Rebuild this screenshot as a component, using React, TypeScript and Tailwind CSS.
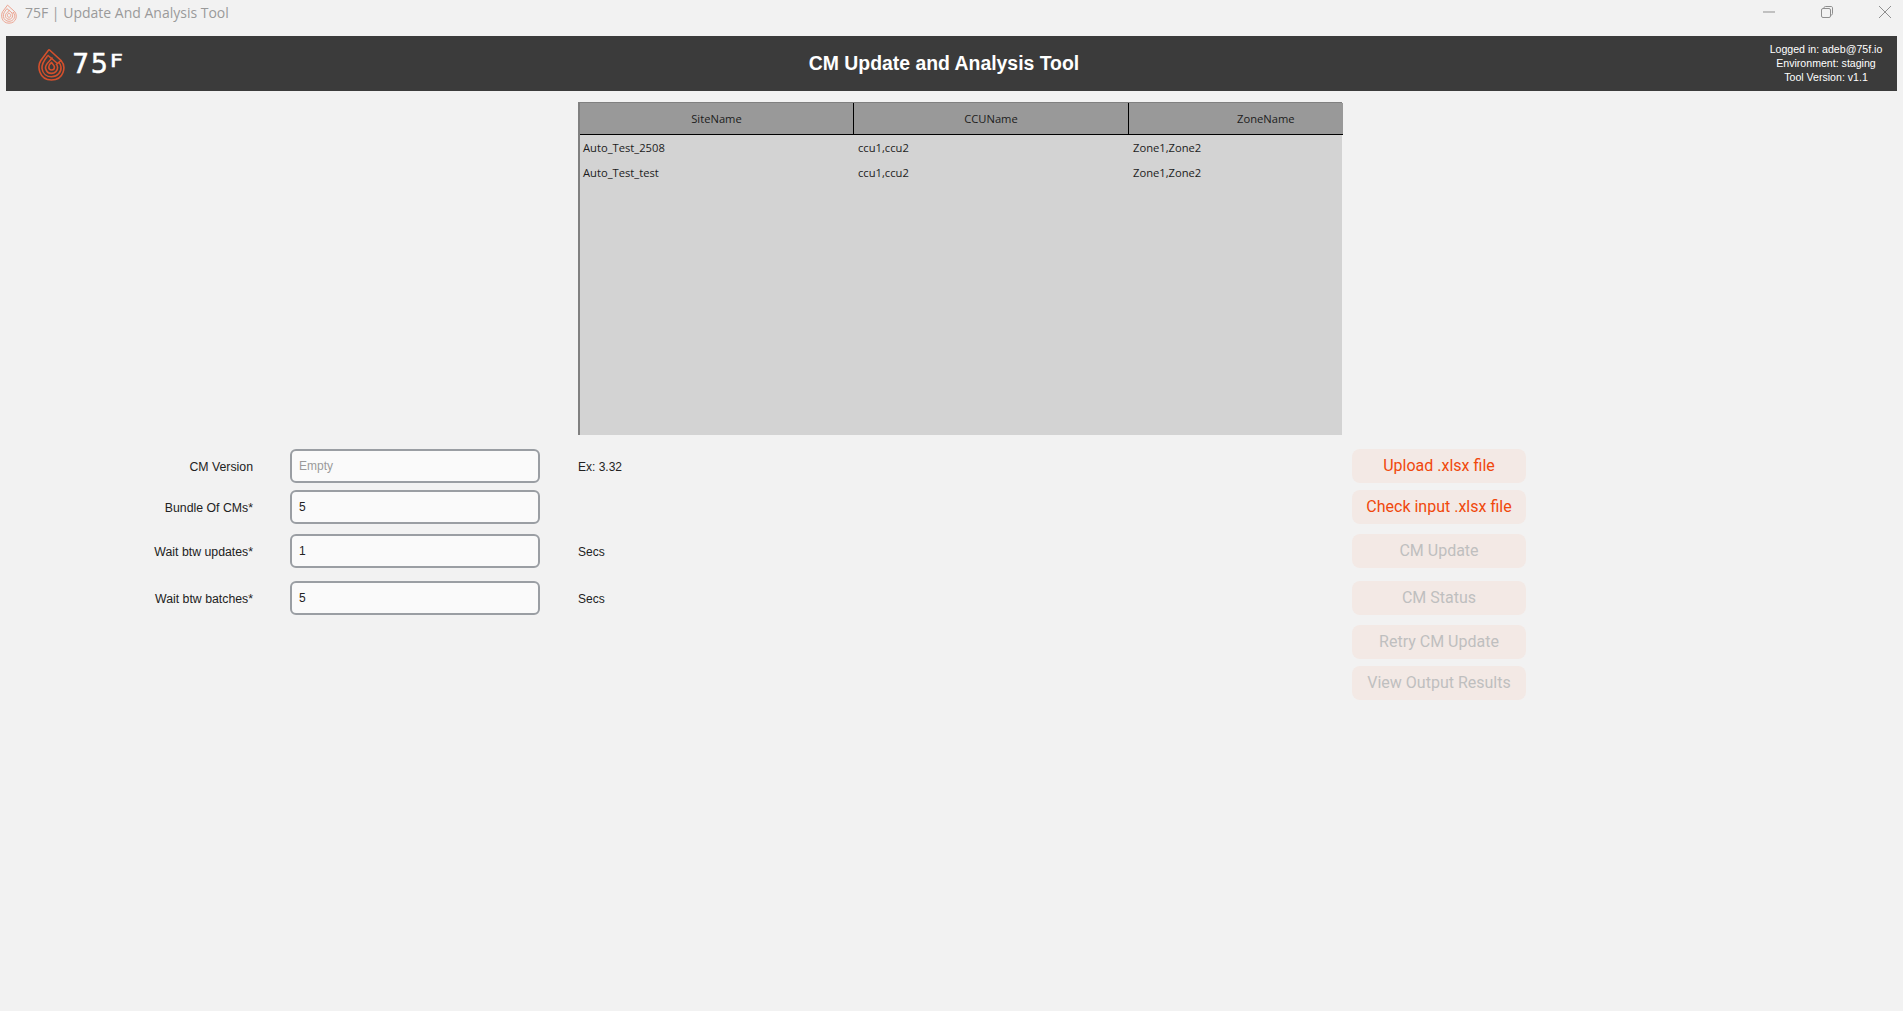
const rows = [
  { site: "Auto_Test_2508", ccu: "ccu1,ccu2", zone: "Zone1,Zone2" },
  { site: "Auto_Test_test", ccu: "ccu1,ccu2", zone: "Zone1,Zone2" },
];

const fields = [
  { label: "CM Version", value: "", note: "Ex: 3.32", mt: "mt-0" },
  { label: "Bundle Of CMs*", value: "5", note: "", mt: "mt-[7px]" },
  { label: "Wait btw updates*", value: "1", note: "Secs", mt: "mt-[10px]" },
  { label: "Wait btw batches*", value: "5", note: "Secs", mt: "mt-[13px]" },
];

const buttons = [
  { text: "Upload .xlsx file", on: true, mt: "mt-0" },
  { text: "Check input .xlsx file", on: true, mt: "mt-[7px]" },
  { text: "CM Update", on: false, mt: "mt-[10px]" },
  { text: "CM Status", on: false, mt: "mt-[13px]" },
  { text: "Retry CM Update", on: false, mt: "mt-[10px]" },
  { text: "View Output Results", on: false, mt: "mt-[7px]" },
];

const Flame = ({ className, stroke }: { className: string; stroke: string }) => (
  <svg viewBox="0 0 27 33" fill="none" stroke={stroke} className={className}>
    <path d="M11 1.5 L2.8 12.5 C-0.8 18 0.6 32 13.5 32 C26 32 28.5 18.5 23 12.5" strokeWidth="1.6" />
    <path d="M9.5 8 C5.5 13 3.5 16.5 4 20.5 C4.8 26 9 28.8 13.5 28.8 C19.5 28.8 23.5 24 23 19 C22.8 17 22 15.5 20.5 14" strokeWidth="1.6" />
    <path d="M11 1.5 L23 12.5 L19.5 15.5 L9.5 7" strokeWidth="1.6" />
    <path d="M14.5 9.5 L11 13.5 C8.5 16 7 18 7.6 20.5 C8.4 23.8 11 25.4 13.5 25.4 C17 25.4 19.6 22.6 19.6 19.6 C19.6 18 19 16.8 18 15.8" strokeWidth="1.6" />
    <path d="M13.5 14.5 C11.5 16 10.8 17.5 10.8 19 C10.8 20.8 12 22 13.6 22 C15.2 22 16.4 20.8 16.4 19.2 C16.4 17.5 15 16.5 13.5 14.5 Z" strokeWidth="1.6" />
  </svg>
);

export default function App() {
  return (
    <div className="min-h-[1011px] bg-[#f2f2f2] font-['Liberation_Sans',sans-serif]">
      {/* window title bar */}
      <div className="flex h-[36px] items-center">
        <Flame className="mb-[8px] ml-[1px] h-[20px] w-[16px]" stroke="#eb9f8b" />
        <span className="mb-[11px] ml-[8px] font-['Open_Sans',sans-serif] text-[14px] text-[#9a9a9a]">
          75F | Update And Analysis Tool
        </span>
        <div className="mb-[13px] ml-auto mr-[11px] flex items-center gap-[44px]">
          <svg viewBox="0 0 14 14" className="h-[14px] w-[14px]" stroke="#8f8f8f" fill="none">
            <path d="M1 7 H13" />
          </svg>
          <svg viewBox="0 0 14 14" className="h-[14px] w-[14px]" stroke="#8f8f8f" fill="none">
            <rect x="1.5" y="3.5" width="9" height="9" rx="1.5" />
            <path d="M4 3.5 V3 C4 2 4.5 1.5 5.5 1.5 H11 C12 1.5 12.5 2 12.5 3 V8.5 C12.5 9.5 12 10 11 10 H10.5" />
          </svg>
          <svg viewBox="0 0 14 14" className="h-[14px] w-[14px]" stroke="#8f8f8f" fill="none">
            <path d="M1 1 L13 13 M13 1 L1 13" />
          </svg>
        </div>
      </div>

      {/* app header */}
      <header className="ml-[6px] flex h-[55px] w-[1891px] items-center bg-[#3b3b3b] text-white">
        <div className="flex w-[240px] items-center pl-[32px]">
          <Flame className="mt-[1px] h-[33px] w-[27px]" stroke="#d4502c" />
          <span className="ml-[7px] flex items-start font-['DejaVu_Sans',sans-serif] leading-none">
            <span className="text-[27px] tracking-[1.5px] [-webkit-text-stroke:0.5px_white]">75</span>
            <span className="ml-[1px] mt-[2px] origin-left scale-x-[1.25] text-[18px] [-webkit-text-stroke:0.5px_white]">F</span>
          </span>
        </div>
        <h1 className="flex-1 pr-[113px] text-center text-[19.4px] font-bold">CM Update and Analysis Tool</h1>
        <div className="mb-[1px] w-[142px] text-center text-[10.6px] leading-[14px]">
          <div>Logged in: adeb@75f.io</div>
          <div>Environment: staging</div>
          <div>Tool Version: v1.1</div>
        </div>
      </header>

      {/* sites table */}
      <div className="ml-[578px] mt-[11px] h-[333px] w-[764px] border-l-2 border-t border-[#808080] bg-[#d3d3d3] font-['Open_Sans',sans-serif] text-[11.2px] text-[#1c1c1c]">
        <div className="grid h-[32px] w-[763px] grid-cols-[274px_275px_214px] items-center border-b border-black bg-[#999999]">
          <div className="h-full border-r border-black text-center leading-[32px]">SiteName</div>
          <div className="h-full border-r border-black text-center leading-[32px]">CCUName</div>
          <div className="h-full pl-[108px] text-left leading-[32px] whitespace-nowrap">ZoneName</div>
        </div>
        {rows.map((r) => (
          <div key={r.site} className="grid h-[25px] w-[763px] grid-cols-[274px_275px_214px] items-center pt-[1px] first:mt-[1px]">
            <div className="pl-[3px]">{r.site}</div>
            <div className="pl-[4px]">{r.ccu}</div>
            <div className="pl-[4px]">{r.zone}</div>
          </div>
        ))}
      </div>

      {/* form and actions */}
      <div className="mt-[14px] flex">
        <div className="flex w-[1352px] flex-col text-[12.3px] text-[#222222]">
          {fields.map((f) => (
            <div key={f.label} className={`flex h-[34px] items-center ${f.mt}`}>
              <label className="w-[253px] pt-[2px] text-right">{f.label}</label>
              <input
                readOnly
                value={f.value}
                placeholder="Empty"
                className="ml-[37px] h-[34px] w-[250px] rounded-[6px] border-2 border-[#9a9ea3] bg-[#fafafa] px-[7px] pb-[1px] text-[12px] text-[#222222] outline-none placeholder:text-[#9a9a9a]"
              />
              <span className="ml-[38px] pt-[2px] text-[12px]">{f.note}</span>
            </div>
          ))}
        </div>
        <div className="flex w-[174px] flex-col font-['Roboto',sans-serif] text-[16px]">
          {buttons.map((b) => (
            <button
              key={b.text}
              className={
                b.on
                  ? `h-[34px] rounded-[8px] bg-[#f3e9e5] text-[#f0480c] ${b.mt}`
                  : `h-[34px] rounded-[8px] bg-[#f3e9e5] text-[#bfbfbf] ${b.mt}`
              }
            >
              {b.text}
            </button>
          ))}
        </div>
      </div>
    </div>
  );
}
